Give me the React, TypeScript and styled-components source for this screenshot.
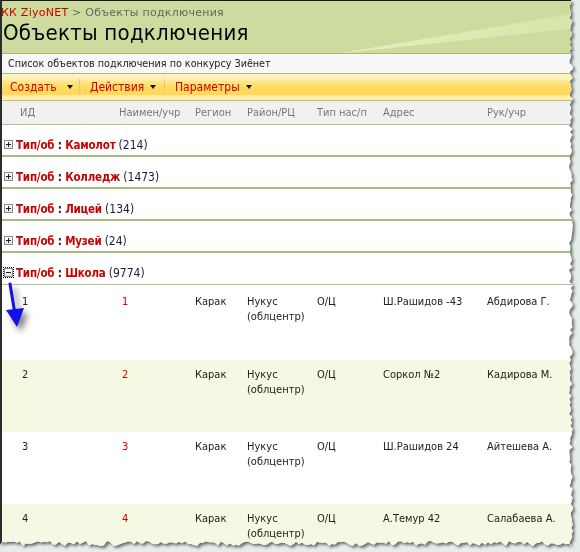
import React from 'react';
import styled, { createGlobalStyle } from 'styled-components';

const GlobalStyle = createGlobalStyle`
  html, body {
    margin: 0;
    padding: 0;
    background: #e6eeeb;
  }
  body {
    font-family: "DejaVu Sans Condensed", "DejaVu Sans", sans-serif;
    font-size: 11px;
    color: #222;
  }
`;

// jagged "torn paper" outline for the right and bottom edge
const tornEdge = (() => {
  let seed = 7;
  const rnd = () => {
    seed = (seed * 9301 + 49297) % 233280;
    return seed / 233280;
  };
  const pts: string[] = ['0px 0px'];
  for (let y = 0; y < 544; y += 3) {
    pts.push(`${(569 + rnd() * 4).toFixed(1)}px ${y}px`);
  }
  for (let x = 572; x > 0; x -= 3) {
    pts.push(`${x}px ${(541 + rnd() * 5).toFixed(1)}px`);
  }
  pts.push('0px 545px');
  return `polygon(${pts.join(', ')})`;
})();

const Frame = styled.div`
  width: 580px;
  height: 552px;
  filter: drop-shadow(2px 2px 1.5px rgba(0, 0, 0, 0.55));
`;

const Page = styled.div`
  position: relative;
  width: 575px;
  height: 548px;
  box-sizing: border-box;
  background: #fff;
  border-top: 1px solid #1a1a1a;
  border-left: 2px solid #2c2c2c;
  overflow: hidden;
  clip-path: ${tornEdge};
`;

const TitleArea = styled.header`
  position: relative;
  height: 52px;
  background: #cddc9e;
  border-bottom: 1px solid #a9b882;
  overflow: hidden;
`;

const Streak = styled.svg`
  position: absolute;
  left: 0;
  top: 0;
`;

const Crumbs = styled.div`
  position: relative;
  padding: 5px 0 0 0;
  margin-left: -1px;
  font-family: "DejaVu Sans", sans-serif;
  font-size: 11px;
  letter-spacing: 0.25px;
  color: #666;
`;

const CrumbLink = styled.span`
  color: #c40000;
`;

const PageTitle = styled.h1`
  position: relative;
  margin: 1px 0 0 1px;
  font-family: "DejaVu Sans Condensed", "DejaVu Sans", sans-serif;
  font-weight: normal;
  font-size: 22px;
  letter-spacing: 0.25px;
  color: #000;
  line-height: 26px;
`;

const Description = styled.div`
  height: 19px;
  padding-left: 6px;
  display: flex;
  align-items: center;
  background: #f8f8f8;
  border-bottom: 1px solid #a9b882;
  font-size: 10.7px;
  color: #222;
`;

const Toolbar = styled.div`
  height: 26px;
  display: flex;
  align-items: center;
  background: linear-gradient(
    #fff4c2 0%,
    #fff0b0 22%,
    #ffe488 30%,
    #ffda5e 55%,
    #ffd95c 80%,
    #fff0a8 84%,
    #fff1ac 100%
  );
  border-bottom: 1px solid #b7c08a;
`;

const ToolButton = styled.div<{ $width: number; $pad: number }>`
  width: ${(p) => p.$width}px;
  height: 16px;
  box-sizing: border-box;
  padding-left: ${(p) => p.$pad}px;
  display: flex;
  align-items: center;
  gap: 6px;
  color: #d40000;
  font-size: 12px;
  border-right: 1px solid #f0c27a;
  &:last-child {
    border-right: none;
  }
`;

const Caret = styled.span<{ $gap?: number }>`
  margin-left: ${(p) => p.$gap ?? 0}px;
  width: 0;
  height: 0;
  border-left: 3.5px solid transparent;
  border-right: 3.5px solid transparent;
  border-top: 4px solid #111;
`;

const Columns = styled.div`
  display: grid;
  grid-template-columns: 115px 76px 52px 70px 66px 104px 1fr;
`;

const HeaderRow = styled(Columns)`
  height: 23px;
  align-items: center;
  background: #f1f1f1;
  border-bottom: 1px solid #b3c18f;
  color: #777;
`;

const HeadCell = styled.div<{ $pad?: number }>`
  padding-left: ${(p) => p.$pad ?? 2}px;
  white-space: nowrap;
`;

const GroupRow = styled.div<{ $last?: boolean }>`
  height: 32px;
  display: flex;
  align-items: flex-end;
  gap: 3px;
  padding: 0 0 ${(p) => (p.$last ? 4 : 3)}px 2px;
  box-sizing: border-box;
  border-bottom: ${(p) => (p.$last ? '1px solid #b3c18f' : '2px solid #a9b87f')};
`;

const Toggle = styled.span<{ $focused?: boolean }>`
  position: relative;
  width: 9px;
  height: 9px;
  margin-bottom: 3px;
  box-sizing: border-box;
  border: 1px solid #8a8a8a;
  background: linear-gradient(#ffffff, #e4e4e4);
  outline: ${(p) => (p.$focused ? '1px dotted #000' : 'none')};
  outline-offset: 0;
  &::before {
    content: '';
    position: absolute;
    left: 1px;
    top: 3px;
    width: 5px;
    height: 1px;
    background: #222;
  }
  &::after {
    content: '';
    display: ${(p) => (p.$focused ? 'none' : 'block')};
    position: absolute;
    left: 3px;
    top: 1px;
    width: 1px;
    height: 5px;
    background: #222;
  }
`;

const GroupLabel = styled.span`
  font-weight: bold;
  font-size: 11.5px;
  letter-spacing: -0.2px;
  color: #cc0000;
`;

const Colon = styled.span`
  color: #222;
`;

const Count = styled.span`
  font-size: 12px;
  color: #1a1a3a;
`;

const DataRow = styled(Columns)<{ $alt?: boolean; $first?: boolean }>`
  height: ${(p) => (p.$first ? 75 : 72)}px;
  padding-top: ${(p) => (p.$first ? 9 : 7)}px;
  box-sizing: border-box;
  background: ${(p) => (p.$alt ? '#f5f8e2' : '#fff')};
  line-height: 15px;
`;

const Cell = styled.div<{ $pad?: number; $red?: boolean }>`
  padding-left: ${(p) => p.$pad ?? 2}px;
  padding-right: 4px;
  color: ${(p) => (p.$red ? '#d00000' : '#222')};
`;

const ArrowMark = styled.svg`
  position: absolute;
  left: 0;
  top: 280px;
  filter: drop-shadow(4px 5px 3px rgba(0, 0, 0, 0.5));
`;

const groups = [
  { name: 'Камолот', count: 214 },
  { name: 'Колледж', count: 1473 },
  { name: 'Лицей', count: 134 },
  { name: 'Музей', count: 24 },
];

const rows = [
  { id: 1, addr: 'Ш.Рашидов -43', head: 'Абдирова Г.' },
  { id: 2, addr: 'Соркол №2', head: 'Кадирова М.' },
  { id: 3, addr: 'Ш.Рашидов 24', head: 'Айтешева А.' },
  { id: 4, addr: 'А.Темур 42', head: 'Салабаева А.' },
];

const App: React.FC = () => {
  return (
    <>
      <GlobalStyle />
      <Frame>
        <Page>
          <TitleArea>
            <Streak width="575" height="52" viewBox="0 0 575 52">
              <defs>
                <linearGradient id="streak" x1="0" y1="0" x2="1" y2="0">
                  <stop offset="0" stopColor="#e6efc6" stopOpacity="0.9" />
                  <stop offset="0.6" stopColor="#dfeab6" stopOpacity="0.9" />
                  <stop offset="1" stopColor="#d8e5ab" stopOpacity="0.9" />
                </linearGradient>
              </defs>
              <polygon points="333,53 575,12 575,27" fill="url(#streak)" />
            </Streak>
            <Crumbs>
              <CrumbLink>КК ZiyoNET</CrumbLink> &gt; Объекты подключения
            </Crumbs>
            <PageTitle>Объекты подключения</PageTitle>
          </TitleArea>

          <Description>Список объектов подключения по конкурсу Зиёнет</Description>

          <Toolbar>
            <ToolButton $width={78} $pad={8}>
              Создать <Caret $gap={4} />
            </ToolButton>
            <ToolButton $width={85} $pad={10}>
              Действия <Caret />
            </ToolButton>
            <ToolButton $width={100} $pad={10}>
              Параметры <Caret />
            </ToolButton>
          </Toolbar>

          <HeaderRow>
            <HeadCell $pad={18}>ИД</HeadCell>
            <HeadCell>Наимен/учр</HeadCell>
            <HeadCell>Регион</HeadCell>
            <HeadCell>Район/РЦ</HeadCell>
            <HeadCell>Тип нас/п</HeadCell>
            <HeadCell>Адрес</HeadCell>
            <HeadCell>Рук/учр</HeadCell>
          </HeaderRow>

          {groups.map((g) => (
            <GroupRow key={g.name}>
              <Toggle />
              <span>
                <GroupLabel>
                  Тип/об <Colon>:</Colon> {g.name}
                </GroupLabel>{' '}
                <Count>({g.count})</Count>
              </span>
            </GroupRow>
          ))}
          <GroupRow $last>
            <Toggle $focused />
            <span>
              <GroupLabel>
                Тип/об <Colon>:</Colon> Школа
              </GroupLabel>{' '}
              <Count>(9774)</Count>
            </span>
          </GroupRow>

          {rows.map((r, i) => (
            <DataRow key={r.id} $alt={i % 2 === 1} $first={i === 0}>
              <Cell $pad={20}>{r.id}</Cell>
              <Cell $pad={5} $red>
                {r.id}
              </Cell>
              <Cell>Карак</Cell>
              <Cell>Нукус (облцентр)</Cell>
              <Cell>О/Ц</Cell>
              <Cell>{r.addr}</Cell>
              <Cell>{r.head}</Cell>
            </DataRow>
          ))}

          <ArrowMark width="30" height="52" viewBox="0 0 30 52">
            <path d="M8 3 L12.5 30" stroke="#1010e8" strokeWidth="3" strokeLinecap="round" fill="none" />
            <polygon points="4,29 22,27 15,46" fill="#1010e8" />
          </ArrowMark>
        </Page>
      </Frame>
    </>
  );
};

export default App;
